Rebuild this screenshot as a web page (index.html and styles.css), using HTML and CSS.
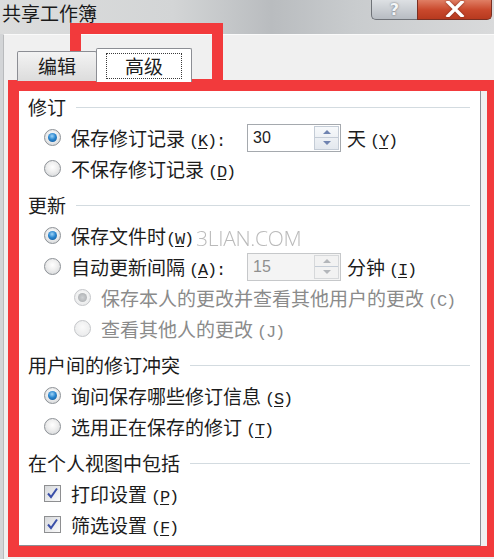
FILE: index.html
```html
<!DOCTYPE html>
<html lang="zh-CN">
<head>
<meta charset="utf-8">
<title>共享工作簿</title>
<link rel="stylesheet" href="styles.css">
</head>
<body>
<div class="window">
  <div class="titlebar">
    <span class="title">共享工作簿</span>
    <div class="caption">
      <div class="cbtn help">?</div>
      <div class="cbtn close">
        <svg width="20" height="16" viewBox="0 0 20 16"><path d="M3 1 L17 15 M17 1 L3 15" stroke="#fff" stroke-width="3.4" stroke-linecap="square" fill="none"/></svg>
      </div>
    </div>
  </div>
  <div class="client">
    <div class="tabs">
      <div class="tab">编辑</div>
      <div class="tab active"><span class="focus">高级</span></div>
    </div>
    <div class="panel">
      <div class="group-title"><span>修订</span></div>
      <div class="row">
        <span class="radio checked"></span>
        <span class="label fixed">保存修订记录<span class="key">(<u>K</u>):</span></span>
        <div class="spin"><span class="val">30</span><span class="arrows"><span class="up"></span><span class="down"></span></span></div>
        <span class="unit">天<span class="key">(<u>Y</u>)</span></span>
      </div>
      <div class="row">
        <span class="radio"></span>
        <span class="label">不保存修订记录<span class="key">(<u>D</u>)</span></span>
      </div>

      <div class="group-title"><span>更新</span></div>
      <div class="row">
        <span class="radio checked"></span>
        <span class="label">保存文件时<span class="key tight">(<u>W</u>)</span></span>
      </div>
      <div class="row">
        <span class="radio"></span>
        <span class="label fixed">自动更新间隔<span class="key">(<u>A</u>):</span></span>
        <div class="spin disabled"><span class="val">15</span><span class="arrows"><span class="up"></span><span class="down"></span></span></div>
        <span class="unit">分钟<span class="key">(<u>I</u>)</span></span>
      </div>
      <div class="row sub disabled">
        <span class="radio checked"></span>
        <span class="label">保存本人的更改并查看其他用户的更改<span class="key">(C)</span></span>
      </div>
      <div class="row sub disabled">
        <span class="radio"></span>
        <span class="label">查看其他人的更改<span class="key">(J)</span></span>
      </div>

      <div class="group-title"><span>用户间的修订冲突</span></div>
      <div class="row">
        <span class="radio checked"></span>
        <span class="label">询问保存哪些修订信息<span class="key">(<u>S</u>)</span></span>
      </div>
      <div class="row">
        <span class="radio"></span>
        <span class="label">选用正在保存的修订<span class="key">(<u>T</u>)</span></span>
      </div>

      <div class="group-title"><span>在个人视图中包括</span></div>
      <div class="row">
        <span class="check"><svg width="13" height="13" viewBox="0 0 13 13"><path d="M2 6.5 L5 10 L11 1.5" stroke="#3a4fa8" stroke-width="2" fill="none"/></svg></span>
        <span class="label">打印设置<span class="key">(<u>P</u>)</span></span>
      </div>
      <div class="row">
        <span class="check"><svg width="13" height="13" viewBox="0 0 13 13"><path d="M2 6.5 L5 10 L11 1.5" stroke="#3a4fa8" stroke-width="2" fill="none"/></svg></span>
        <span class="label">筛选设置<span class="key">(<u>F</u>)</span></span>
      </div>
    </div>
  </div>
  <div class="watermark">3LIAN.COM</div>
  <div class="mark mark-tab"></div>
  <div class="mark mark-panel"></div>
</div>
</body>
</html>
```

FILE: styles.css
```css
* { box-sizing: border-box; }
html, body { margin: 0; padding: 0; }
body {
  width: 494px;
  height: 559px;
  overflow: hidden;
  background: #d6d7d8;
  font-family: "Noto Sans CJK SC", "Noto Sans", sans-serif;
  color: #1c1c1c;
}
.window {
  position: relative;
  width: 494px;
  height: 559px;
  background: #d3d5d7;
}
.titlebar {
  height: 34px;
  display: flex;
  align-items: flex-start;
  justify-content: space-between;
  background: linear-gradient(to right, #dcdddd 0%, #d3d5d6 35%, #b9bcbf 55%, #c9ccce 72%, #d9dadb 100%);
}
.title {
  font-size: 19px;
  line-height: 24px;
  margin: 1px 0 0 2px;
  color: #1a1a1a;
}
.caption {
  display: flex;
  margin-right: 2px;
}
.cbtn {
  height: 21px;
  margin-top: -1px;
  display: flex;
  align-items: center;
  justify-content: center;
}
.help {
  width: 46px;
  border: 1px solid #6f7378;
  border-top: none;
  border-right: none;
  border-radius: 0 0 0 5px;
  background: linear-gradient(#dfe2e5, #b7bcc2);
  color: #f4f6f8;
  font-family: "DejaVu Sans", sans-serif;
  font-weight: bold;
  font-size: 16px;
  text-shadow: 0 0 2px #5b6068;
}
.close {
  width: 75px;
  border: 1px solid #7a2f22;
  border-top: none;
  border-radius: 0 0 5px 0;
  background: linear-gradient(#e2846a, #c9482c 55%, #b73a1f);
}
.close svg { filter: drop-shadow(0 0 1px #7a2a1a); }
.client {
  margin-left: 3px;
  height: 525px;
  background: #f0f0f0;
  border-left: 1px solid #b9bbbd;
  border-top: 1px solid #fafafa;
  padding-left: 8px;
}
.tabs {
  display: flex;
  align-items: flex-end;
  height: 46px;
  padding-left: 5px;
  position: relative;
  z-index: 1;
}
.tab {
  height: 30px;
  width: 80px;
  border: 1px solid #8c8e94;
  border-bottom: none;
  border-radius: 2px 2px 0 0;
  background: linear-gradient(#f3f3f3, #dcdcdc);
  font-size: 19px;
  line-height: 28px;
  text-align: center;
}
.tab.active {
  width: 96px;
  height: 34px;
  margin-left: -1px;
  margin-bottom: -1px;
  background: #ffffff;
  padding: 4px 0 0 9px;
  text-align: left;
}
.focus {
  display: block;
  width: 76px;
  height: 26px;
  border: 1px dotted #3a3a3a;
  line-height: 24px;
  text-align: center;
}
.panel {
  width: 469px;
  height: 465px;
  background: #ffffff;
  border: 1px solid #8c8e94;
  padding: 8px 0 0 15px;
  display: flex;
  flex-direction: column;
}
.group-title {
  height: 32px;
  margin-top: 4px;
  display: flex;
  align-items: center;
  font-size: 19px;
  padding-right: 10px;
}
.group-title:first-child { margin-top: 0; }
.group-title::after {
  content: "";
  flex: 1;
  height: 0;
  border-top: 1px solid #d3dbe0;
  margin-left: 10px;
  margin-top: 2px;
}
.row {
  height: 31px;
  display: flex;
  align-items: center;
  padding-left: 16px;
  font-size: 19px;
  white-space: nowrap;
}
.row.sub { padding-left: 46px; }
.row.disabled { color: #8b8b8b; }
.label { margin-left: 10px; }
.label.fixed { width: 176px; }
.key {
  font-family: "Liberation Mono", monospace;
  font-size: 17px;
  margin-left: 4px;
  letter-spacing: -1.2px;
}
.key.tight { margin-left: 0; }
.key u { text-underline-offset: 2px; }
.radio {
  width: 17px;
  height: 17px;
  border-radius: 50%;
  border: 1px solid #8d9196;
  background: radial-gradient(circle at 50% 40%, #ffffff 0%, #eeeeee 45%, #cdd0d3 100%);
  flex: none;
  position: relative;
}
.radio.checked::after {
  content: "";
  position: absolute;
  left: 3px;
  top: 3px;
  width: 9px;
  height: 9px;
  border-radius: 50%;
  background: radial-gradient(circle at 45% 35%, #9fd4f7 0%, #2a86cf 45%, #0d4f8f 100%);
}
.row.disabled .radio {
  border-color: #c4c6c9;
  background: radial-gradient(circle at 50% 40%, #fafafa, #e6e7e8);
}
.row.disabled .radio.checked::after {
  background: radial-gradient(circle, #cfd1d3 0%, #a6a9ac 100%);
}
.check {
  width: 17px;
  height: 17px;
  flex: none;
  border: 1px solid #8e8f91;
  background: linear-gradient(135deg, #d6d8db, #fbfbfb);
  display: flex;
  align-items: center;
  justify-content: center;
}
.spin {
  width: 94px;
  height: 28px;
  border: 1px solid #a5a9ae;
  background: #fff;
  display: flex;
  align-items: center;
  justify-content: space-between;
  padding: 0 1px 0 5px;
  font-family: "Liberation Sans", sans-serif;
  font-size: 16px;
  color: #1c1c1c;
}
.spin.disabled { background: #f4f4f4; border-color: #c6c8ca; color: #8f8f8f; }
.arrows {
  width: 25px;
  height: 24px;
  display: flex;
  flex-direction: column;
  border: 1px solid #c4ccd6;
  background: linear-gradient(#f7f9fb, #e3e8ee);
}
.arrows span {
  flex: 1;
  display: flex;
  align-items: center;
  justify-content: center;
}
.arrows .up { border-bottom: 1px solid #c4ccd6; }
.arrows .up::after {
  content: "";
  border-left: 4px solid transparent;
  border-right: 4px solid transparent;
  border-bottom: 4px solid #6f83b0;
}
.arrows .down::after {
  content: "";
  border-left: 4px solid transparent;
  border-right: 4px solid transparent;
  border-top: 4px solid #6f83b0;
}
.spin.disabled .arrows { border-color: #d6d8da; background: #f2f2f2; }
.spin.disabled .arrows .up::after { border-bottom-color: #b3b6ba; }
.spin.disabled .arrows .down::after { border-top-color: #b3b6ba; }
.unit { margin-left: 6px; }
.watermark {
  position: absolute;
  left: 196px;
  top: 224px;
  font-family: "Open Sans", "DejaVu Sans", sans-serif;
  font-weight: 300;
  font-size: 21px;
  letter-spacing: -0.3px;
  color: #a9a9a9;
  opacity: 0.8;
  pointer-events: none;
}
.mark {
  position: absolute;
  border: 11px solid #f23a3c;
  pointer-events: none;
}
.mark-tab {
  left: 70px;
  top: 23px;
  width: 153px;
  height: 67px;
}
.mark-panel {
  left: 8px;
  top: 80px;
  width: 490px;
  height: 477px;
}
```
